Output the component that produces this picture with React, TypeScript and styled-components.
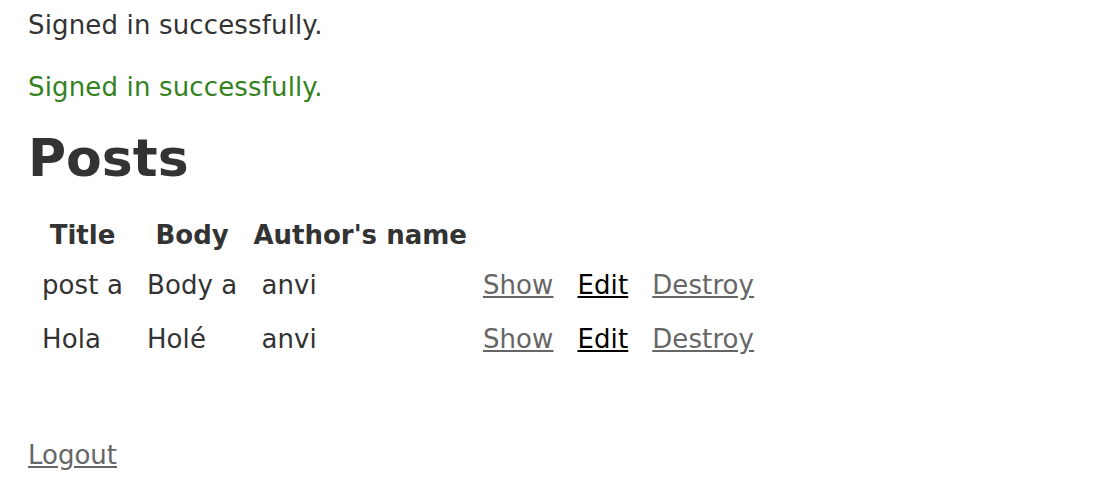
import React from "react";
import styled, { createGlobalStyle } from "styled-components";

const Global = createGlobalStyle`
  html, body { margin: 0; background: #fff; }
  body {
    padding: 7px 28px;
    color: #333;
    font-family: "DejaVu Sans", Verdana, sans-serif;
    font-size: 26px;
    line-height: 36px;
  }
`;

const Flash = styled.p<{ $notice?: boolean }>`
  margin: 0 0 26px;
  letter-spacing: 0.15px;
  color: ${(p) => (p.$notice ? "#34821f" : "#333")};
`;

const Heading = styled.h1`
  font-size: 52px;
  line-height: 36px;
  margin: 35px 0;
  font-weight: bold;
`;

const Table = styled.table`
  border-spacing: 4px;
  margin: 0;
`;

const Th = styled.th`
  padding: 2px 2px 10px;
  font-weight: bold;
  text-align: center;
`;

const Td = styled.td`
  padding: 0 10px 14px;
  letter-spacing: 0.1px;
`;

const Link = styled.a<{ $visited?: boolean }>`
  color: ${(p) => (p.$visited ? "#666" : "#000")};
  text-decoration: underline;
`;

const Footer = styled.p`
  margin: 62px 0 0;
`;

const posts = [
  { title: "post a", body: "Body a", author: "anvi" },
  { title: "Hola", body: "Holé", author: "anvi" },
];

export default function App() {
  return (
    <>
      <Global />
      <Flash>Signed in successfully.</Flash>
      <Flash $notice>Signed in successfully.</Flash>
      <Heading>Posts</Heading>
      <Table>
        <thead>
          <tr>
            <Th>Title</Th>
            <Th>Body</Th>
            <Th>Author's name</Th>
            <Th colSpan={3}></Th>
          </tr>
        </thead>
        <tbody>
          {posts.map((p, i) => (
            <tr key={i}>
              <Td>{p.title}</Td>
              <Td>{p.body}</Td>
              <Td>{p.author}</Td>
              <Td>
                <Link $visited href="#">Show</Link>
              </Td>
              <Td>
                <Link href="#">Edit</Link>
              </Td>
              <Td>
                <Link $visited href="#">Destroy</Link>
              </Td>
            </tr>
          ))}
        </tbody>
      </Table>
      <Footer>
        <Link $visited href="#">Logout</Link>
      </Footer>
    </>
  );
}
